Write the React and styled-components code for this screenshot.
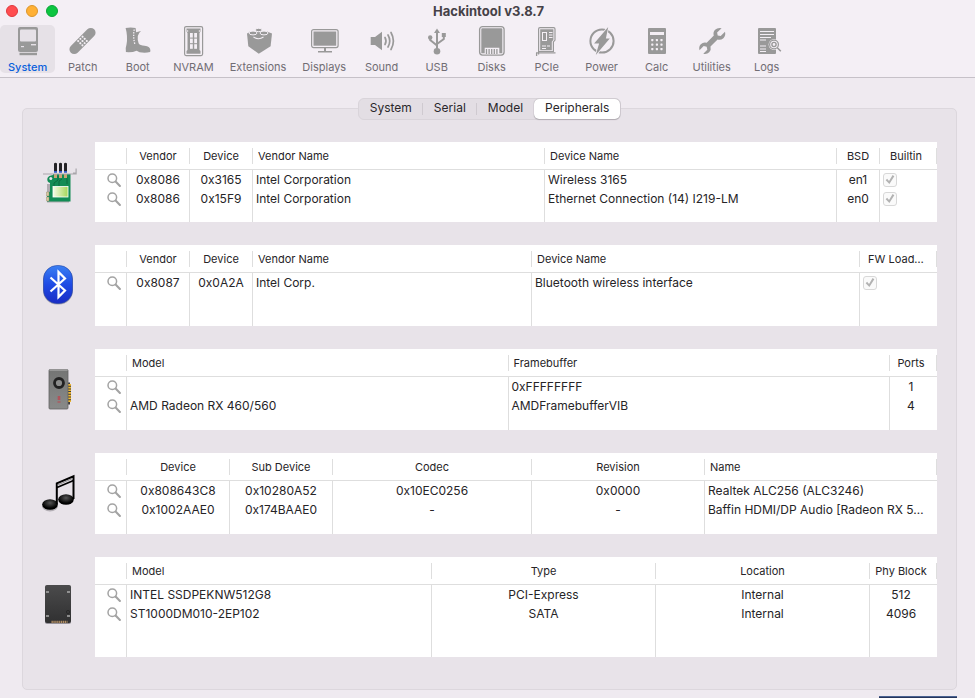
import React from "react";
import styled, { createGlobalStyle } from "styled-components";

const Global = createGlobalStyle`
  * { box-sizing: border-box; }
  html, body, #root { height: 100%; }
  body {
    margin: 0;
    background: #efeaf0;
    color: #262427;
    font-family: Inter, "Liberation Sans", sans-serif;
    font-size: 12px;
    overflow: hidden;
  }
  button { font: inherit; color: inherit; border: 0; background: none; padding: 0; }
`;

const Window = styled.div`
  display: flex;
  flex-direction: column;
  min-height: 100%;
`;

const Header = styled.header`
  background: #f4eff5;
  border-bottom: 1px solid #c6c1c8;
  padding-bottom: 4px;
`;

const TitleBar = styled.div`
  display: grid;
  grid-template-columns: 1fr auto 1fr;
  align-items: center;
  height: 25px;
  padding: 0 4px 3px 6px;
`;

const Lights = styled.div`
  display: flex;
  gap: 8px;
`;

const Light = styled.button`
  width: 12px;
  height: 12px;
  border-radius: 50%;
  background: ${(p) => p.$fill};
  border: 1px solid ${(p) => p.$edge};
`;

const Title = styled.h1`
  margin: 0;
  font-size: 13px;
  line-height: 16px;
  font-weight: 700;
  color: #454147;
`;

const Toolbar = styled.nav`
  display: flex;
`;

const Tool = styled.button`
  display: flex;
  flex-direction: column;
  align-items: center;
  min-width: 55px;
  height: 48px;
  padding: 0 8px;
  border-radius: 5px;
  font-size: 11px;
  line-height: 16px;
  gap: 2px;
  --ground: ${(p) => (p.$active ? "#e6e1e7" : "#f4eff5")};
  background: var(--ground);
  color: ${(p) => (p.$active ? "#0a60dc" : "#716d74")};
  font-weight: ${(p) => (p.$active ? 500 : 400)};
`;

const ToolSvg = styled.svg`
  display: block;
  width: 31px;
  height: 32px;
  flex: none;
  fill: #999;
  stroke: none;
`;

const Main = styled.main`
  display: flex;
  flex-direction: column;
  padding: 20px 18px 6px 22px;
`;

const Segments = styled.div`
  display: flex;
  align-self: center;
  margin: 0 0 -12px;
  z-index: 1;
  height: 22px;
  border-radius: 6px;
  border: 1px solid #d9d4da;
  background: #e3dee4;
`;

const Segment = styled.button`
  display: flex;
  align-items: center;
  padding: 0 11px 2px;
  line-height: 18px;
  color: #2a272b;
  background: ${(p) =>
    p.$divider ? "linear-gradient(#cfcad0, #cfcad0) no-repeat right 4px / 1px 12px" : "none"};

  &[aria-selected="true"] {
    border-radius: 5px;
    background: #fff;
    box-shadow: 0 0 1px #8c888e, 0 1px 1px #b5b0b6;
  }
`;

const Panel = styled.section`
  display: flex;
  flex-direction: column;
  gap: 23px;
  padding: 33px 19px 32px 11px;
  border: 1px solid #dcd7dd;
  border-radius: 5px;
  background: #e8e3e9;
`;

const Group = styled.div`
  display: grid;
  grid-template-columns: 50px minmax(0, 1fr);
  column-gap: 11px;
  align-items: start;
`;

const Device = styled.svg`
  display: block;
  width: 50px;
  height: 50px;
  margin-top: 18px;
`;

const Table = styled.table`
  width: 100%;
  height: ${(p) => p.$height}px;
  table-layout: fixed;
  border-collapse: separate;
  border-spacing: 0;
  background: #fff;
`;

const Col = styled.col`
  width: ${(p) => (p.$width ? `${p.$width}px` : "auto")};
`;

const Th = styled.th`
  height: 28px;
  padding: 0 6px 0 5px;
  border-bottom: 1px solid #dedede;
  background: linear-gradient(#dedede, #dedede) no-repeat right 6px / 1px 16px;
  font-size: 11px;
  font-weight: 400;
  line-height: 16px;
  text-align: ${(p) => (p.$left ? "left" : "center")};
  white-space: nowrap;
  overflow: hidden;
  &:last-child {
    padding-left: ${(p) => (p.$left ? 5 : 3)}px;
    padding-right: 8px;
  }
`;

const Td = styled.td`
  height: ${(p) => (p.$filler ? "auto" : "19px")};
  padding: 0 3px;
  border-right: 1px solid #dedede;
  line-height: 19px;
  text-align: ${(p) => (p.$left ? "left" : "center")};
  white-space: nowrap;
  overflow: hidden;
  text-overflow: ellipsis;
  &:last-child {
    border-right-color: transparent;
    padding-right: 7px;
  }
`;

const Lookup = styled.button`
  display: block;
  margin-left: 9px;
  svg { display: block; width: 14px; height: 14px; }
`;

const Check = styled.input`
  appearance: none;
  display: block;
  width: 14px;
  height: 14px;
  margin: 0;
  border: 1px solid #d8d8d8;
  border-radius: 3px;
  background: #fafafa;
  &::before {
    content: "";
    display: block;
    width: 12px;
    height: 12px;
    background: #b2b2b2;
    clip-path: polygon(14% 56%, 26% 44%, 42% 62%, 72% 12%, 86% 22%, 45% 88%);
  }
`;

const Dock = styled.div`
  align-self: flex-end;
  width: 78px;
  height: 2px;
  margin-right: 18px;
  background: #26355c;
  border-top: 1px solid #4a6391;
`;

const cut = { fill: "var(--ground)" };
const line = { fill: "none", stroke: "#999" };
const cutLine = { fill: "none", stroke: "var(--ground)" };

const grid = (xs, ys, draw) => xs.flatMap((x) => ys.map((y) => draw(x, y)));

const toolIcons = {
  System: (
    <>
      <rect x="6" y="2" width="20" height="25" rx="2" />
      <rect x="8" y="4.5" width="16" height="12" rx="1" {...cut} />
      <rect x="19" y="19" width="5" height="1.4" {...cut} />
      <rect x="9" y="21" width="3" height="1.2" {...cut} />
      <path d="M7.5 27.8h17.5v2.4h-17.5z" />
    </>
  ),
  Patch: (
    <g transform="rotate(-45 15.5 16)">
      <rect x="-1" y="11.2" width="33" height="9.6" rx="4.8" />
      {grid([12.4, 15.5, 18.6], [13, 16, 19], (x, y) => (
        <circle key={`${x}-${y}`} cx={x} cy={y} r="1.05" {...cut} />
      ))}
    </g>
  ),
  Boot: (
    <>
      <path d="M3.6 3q5-1.2 10 0l.5 4.2 4.9-1.3q-2.6 2-3.2 5.1-.5 4 .9 7.5 1.400 2 5.800 2.300 6 .4 5.900 5l-.3 1.200q-5 1.200-10.500.2l-3-1.500q-4.400 2-10.700 1.400-.8-3.500.6-7.500 1.500-8-.9-16.600z" />
      <path d="M12.2 4.5q-1.3 7 .6 14.500" {...cutLine} strokeWidth="1.3" strokeDasharray="1.4 1.2" />
    </>
  ),
  NVRAM: (
    <>
      <rect x="6.6" y="1.6" width="18" height="29" rx="1.5" {...line} strokeWidth="1.2" />
      <path d="M8.5 3.5h14v3l-1 1.500v17l1 1v2.800h-14v-2.800l1-1v-17l-1-1.500z" />
      {grid([12, 16.2], [8, 13.6, 19.2], (x, y) => (
        <rect key={`${x}-${y}`} x={x} y={y} width="2.8" height="4.6" {...cut} />
      ))}
      <circle cx="9.5" cy="6" r=".8" {...cut} />
      <circle cx="21.5" cy="6" r=".8" {...cut} />
    </>
  ),
  Extensions: (
    <>
      <path d="M4 8.500l5-2.500h13.500l6.500 2.500-1.400 12.800-11.800 7.500-10.500-7.500z" />
      <g stroke="var(--ground)" strokeWidth="1">
        <ellipse cx="15.700" cy="5" rx="3.400" ry="1.700" />
        <ellipse cx="10" cy="8" rx="4" ry="1.900" />
        <ellipse cx="21" cy="8" rx="4" ry="1.900" />
      </g>
      <path d="M10.500 12q5 3.400 10 0" {...cutLine} strokeWidth="1.100" />
    </>
  ),
  Displays: (
    <>
      <rect x="2.6" y="4.6" width="26.5" height="18" rx="2" {...line} strokeWidth="1.2" />
      <rect x="4.5" y="6.5" width="22.7" height="14.2" />
      <path d="M15 23h2v3h6v1.5h-14v-1.5h6z" />
    </>
  ),
  Sound: (
    <>
      <path d="M4.7 12h4.300l7-5.300v18.600l-7-5.300h-4.300z" />
      <g {...line} strokeWidth="1.7" strokeLinecap="round">
        <path d="M19 12.5q2 3.500 0 7" />
        <path d="M22 10q3.500 6 0 12" />
        <path d="M25 7.5q4.800 8.500 0 17" />
      </g>
    </>
  ),
  USB: (
    <>
      <path d="M16 3.5l3 4.500h-6z" />
      <circle cx="16" cy="26.2" r="3.3" />
      <circle cx="9.2" cy="12.5" r="2.2" />
      <path d="M20.8 8h4v4h-4z" />
      <path d="M16 7v18M9.2 12.5v2.5l6.800 5.500M22.800 11v3l-6.800 5" {...line} strokeWidth="2" />
    </>
  ),
  Disks: (
    <>
      <rect x="3.6" y="1.6" width="24.5" height="28.5" rx="3" {...line} strokeWidth="1.3" />
      <path d="M5.3 4.3q0-1 1-1h19q1 0 1 1v24h-3v-5.500h-14.600v5.500h-3.400z" />
      <path d="M10.5 24v5M13.1 24v5M15.7 24v5M18.3 24v5M20.9 24v5" {...line} strokeWidth="1.3" />
    </>
  ),
  PCIe: (
    <>
      <path d="M7.6 29.5v-25.500q0-1.400 1.400-1.400h13.600q1.400 0 1.400 1.400v11l-1.600 2v9.500h-14.800" {...line} strokeWidth="1.2" />
      <path d="M9.2 4.2h13.200v10.500l-1.600 2v8.600h-11.600z" />
      <path d="M5 27.8h19.500M5.6 28v3" {...line} strokeWidth="1.3" />
      <rect x="11.5" y="7.5" width="4" height="8" {...cutLine} />
      <path d="M18 7.5h3.500M18 10h3.500M18 12.5h3.500M11 21h4M16 21h3M11 23.5h4" {...cutLine} strokeWidth="1" />
    </>
  ),
  Power: (
    <>
      <circle cx="16" cy="16" r="11.6" {...line} strokeWidth="2" />
      <path d="M22.2 2l-2.300 11.500h3.900l-14 16.500 3.300-11.600h-5z" stroke="var(--ground)" strokeWidth="1.6" paintOrder="stroke" />
    </>
  ),
  Calc: (
    <>
      <rect x="7" y="3" width="18" height="26" rx="1" />
      <rect x="9" y="7" width="14" height="3" {...cut} />
      {grid([10.2, 14.8, 19.4], [14, 18.5, 23], (x, y) => (
        <rect key={`${x}-${y}`} x={x} y={y} width="2.2" height="2.2" rx=".6" {...cut} />
      ))}
    </>
  ),
  Utilities: (
    <path d="M25.6 3.2l-4.500 4.300.6 3.100 3 .5 4.300-4.300q1 4-1.600 6.400-2.600 2.200-5.800 1.300l-7.100 7.100q.9 3.200-1.300 5.700-2.300 2.300-5.900 1.500l4-4-.6-3.100-3-.6-4.200 4.200q-1-3.600 1.300-6.100 2.500-2.500 5.900-1.500l7.100-7.100q-1.100-3.300 1.300-5.800 2.600-2.500 6.500-1.600z" />
  ),
  Logs: (
    <>
      <rect x="7" y="3" width="18" height="26" rx="1" />
      <path d="M9 6.5h14M9 9.5h14M9 12.5h11M9 15h6M9 21h6M9 24h6M9 26.5h6" {...cutLine} strokeWidth="1" />
      <circle cx="23" cy="19.5" r="5.4" {...cut} />
      <circle cx="23" cy="19.5" r="4.4" {...line} strokeWidth="1.2" />
      <circle cx="23" cy="19.5" r="2.1" {...line} strokeWidth="1.4" />
      <path d="M26.3 22.8l3.500 3.500" {...line} strokeWidth="1.6" />
    </>
  ),
};

const NetworkIcon = () => (
  <Device viewBox="0 0 50 50" role="img" aria-label="Network">
    <defs>
      <linearGradient id="lcd">
        <stop offset="0" stopColor="#f4fbe6" />
        <stop offset="1" stopColor="#a5d659" />
      </linearGradient>
    </defs>
    <path d="M13 24h22v18.500h-22z" fill="#77737a" opacity=".5" />
    <path d="M19 14h17.500v27.500h-23.500v-8l3-2v-8.500q-3.500-1-2.500-5 1-2.500 5.500-3z" fill="#128c55" />
    <path d="M20 27v-4l4-3v-4M25 26v-5l3-2M33 17v7" stroke="#0b6b40" fill="none" />
    <circle cx="16.8" cy="18.5" r="1.5" fill="#e8e3e9" />
    <path d="M20 14h3v4h-3zM25 14h3v4h-3zM30 14h3v4h-3z" fill="#c9a574" />
    <path d="M9 13.5h30v-1h2.500v-4h1.200v6h-33.700z" fill="#a9a6ab" />
    <path d="M20 3.5q1.500-1.500 3 0v8h-3zM25 3.5q1.500-1.500 3 0v8h-3zM30 3.5q1.500-1.500 3 0v8h-3z" fill="#242326" />
    <path d="M20 11h3v1.700h-3zM25 11h3v1.700h-3zM30 11h3v1.700h-3z" fill="#3357c2" />
    <rect x="19" y="26.5" width="15" height="10.5" fill="url(#lcd)" stroke="#fff" strokeWidth=".8" />
    <path d="M12.5 32h2.500v4h-2.500zM12.5 37h2.500v4h-2.500z" fill="#d8c9a0" stroke="#8b7f61" strokeWidth=".4" />
  </Device>
);

const BluetoothIcon = () => (
  <Device viewBox="0 0 50 50" role="img" aria-label="Bluetooth">
    <defs>
      <linearGradient id="bt" x2="0" y2="1">
        <stop offset="0" stopColor="#3a80f3" />
        <stop offset=".5" stopColor="#1f4be4" />
        <stop offset="1" stopColor="#1a2cc4" />
      </linearGradient>
    </defs>
    <rect x="9" y="3" width="30" height="38.5" rx="14" fill="#8d899a" opacity=".7" />
    <rect x="9.5" y="2.5" width="29" height="38" rx="13.5" fill="url(#bt)" stroke="#2145a8" strokeWidth=".6" />
    <path d="M16.5 14.5l14.500 13-6.500 6.500v-25l6.500 6.500-14.500 13" fill="none" stroke="#fff" strokeWidth="2.2" />
  </Device>
);

const GraphicsIcon = () => (
  <Device viewBox="0 0 50 50" role="img" aria-label="Graphics">
    <defs>
      <linearGradient id="gpu" x2="0" y2="1">
        <stop offset="0" stopColor="#747574" />
        <stop offset="1" stopColor="#898a89" />
      </linearGradient>
    </defs>
    <path d="M33 15.5h3v22h-3z" fill="#3c3a3a" />
    <path d="M35.5 17v18" stroke="#3c3a3a" strokeWidth="3" />
    <path d="M35.5 17v18" stroke="#f2b92e" strokeWidth="3" strokeDasharray="1.7 1" />
    <rect x="15" y="2.5" width="19" height="39.5" rx="1" fill="url(#gpu)" stroke="#626262" strokeWidth=".8" />
    <path d="M15.5 3h18" stroke="#b7b7b7" />
    <circle cx="25" cy="16" r="4.5" fill="#8b8c8b" stroke="#222" strokeWidth="2.8" />
    <path d="M23.5 30h3M23.5 32h3M25 29v4M23.5 35h3" stroke="#bd4650" strokeWidth="1.1" />
  </Device>
);

const AudioIcon = () => (
  <Device viewBox="0 0 50 50" role="img" aria-label="Audio">
    <defs>
      <radialGradient id="note" cy=".35">
        <stop offset="0" stopColor="#555" />
        <stop offset="1" stopColor="#000" />
      </radialGradient>
    </defs>
    <ellipse cx="16" cy="35" rx="8" ry="5.4" fill="#9c989e" opacity=".7" />
    <ellipse cx="16" cy="33.5" rx="7.8" ry="5.3" fill="url(#note)" />
    <ellipse cx="32" cy="28.5" rx="7.8" ry="5.3" fill="url(#note)" />
    <path d="M22.8 33v-20.700l16.700-7v22.700" fill="none" stroke="#000" strokeWidth="2" />
    <path d="M23 16.5l16.500-7" stroke="#000" strokeWidth="1.8" />
    <path d="M23 14.3l16-7" stroke="#777" strokeWidth=".8" />
  </Device>
);

const StorageIcon = () => (
  <Device viewBox="0 0 50 50" role="img" aria-label="Storage">
    <defs>
      <linearGradient id="ssd" x2="0" y2="1">
        <stop offset="0" stopColor="#4b4b4c" />
        <stop offset="1" stopColor="#303031" />
      </linearGradient>
    </defs>
    <rect x="11" y="10.5" width="26" height="38.5" rx="2" fill="#96929a" />
    <rect x="11" y="10" width="26" height="38" rx="2" fill="url(#ssd)" />
    <path d="M12 17h3M33 17h3M12 41h3M33 41h3" stroke="#aaa" strokeWidth="1.6" />
    <circle cx="34" cy="37" r="1.6" fill="none" stroke="#222" strokeWidth=".7" />
    <path d="M17.5 46.8h16" stroke="#b18e65" strokeWidth="2.2" strokeDasharray="1.3 .6" />
  </Device>
);

const col = (label, width, left) => ({ label, width, left });

const groups = [
  {
    Icon: NetworkIcon,
    height: 80,
    cols: [col("Vendor", 63), col("Device", 63), col("Vendor Name", 0, true), col("Device Name", 0, true), col("BSD", 43), col("Builtin", 57)],
    rows: [
      ["0x8086", "0x3165", "Intel Corporation", "Wireless 3165", "en1", true],
      ["0x8086", "0x15F9", "Intel Corporation", "Ethernet Connection (14) I219-LM", "en0", true],
    ],
  },
  {
    Icon: BluetoothIcon,
    height: 81,
    cols: [col("Vendor", 63), col("Device", 63), col("Vendor Name", 279, true), col("Device Name", 0, true), col("FW Load…", 77)],
    rows: [["0x8087", "0x0A2A", "Intel Corp.", "Bluetooth wireless interface", true]],
  },
  {
    Icon: GraphicsIcon,
    height: 81,
    cols: [col("Model", 0, true), col("Framebuffer", 0, true), col("Ports", 47)],
    rows: [
      ["", "0xFFFFFFFF", "1"],
      ["AMD Radeon RX 460/560", "AMDFramebufferVIB", "4"],
    ],
  },
  {
    Icon: AudioIcon,
    height: 81,
    cols: [col("Device", 103), col("Sub Device", 103), col("Codec", 199), col("Revision", 173), col("Name", 0, true)],
    rows: [
      ["0x808643C8", "0x10280A52", "0x10EC0256", "0x0000", "Realtek ALC256 (ALC3246)"],
      ["0x1002AAE0", "0x174BAAE0", "-", "-", "Baffin HDMI/DP Audio [Radeon RX 5…"],
    ],
  },
  {
    Icon: StorageIcon,
    height: 100,
    cols: [col("Model", 0, true), col("Type", 224), col("Location", 214), col("Phy Block", 67)],
    rows: [
      ["INTEL SSDPEKNW512G8", "PCI-Express", "Internal", "512"],
      ["ST1000DM010-2EP102", "SATA", "Internal", "4096"],
    ],
  },
];

const DeviceGroup = ({ Icon, height, cols, rows }) => (
  <Group>
    <Icon />
    <Table $height={height}>
      <colgroup>
        <Col $width={32} />
        {cols.map((c) => <Col key={c.label} $width={c.width} />)}
      </colgroup>
      <thead>
        <tr>
          <Th aria-label="Show" />
          {cols.map((c) => <Th key={c.label} $left={c.left}>{c.label}</Th>)}
        </tr>
      </thead>
      <tbody>
        {rows.map((row, r) => (
          <tr key={r}>
            <Td $left>
              <Lookup aria-label="Show device">
                <svg viewBox="0 0 14 14" fill="none" stroke="#a3a3a3">
                  <circle cx="5.3" cy="5.3" r="4.3" strokeWidth="1.5" />
                  <path d="M8.6 8.6l4.300 4.300" strokeWidth="2.1" strokeLinecap="round" />
                </svg>
              </Lookup>
            </Td>
            {row.map((v, i) => (
              <Td key={i} $left={cols[i].left}>
                {v === true ? <Check type="checkbox" aria-label={cols[i].label} defaultChecked disabled /> : v}
              </Td>
            ))}
          </tr>
        ))}
        <tr>
          <Td $filler />
          {cols.map((c) => <Td key={c.label} $filler />)}
        </tr>
      </tbody>
    </Table>
  </Group>
);

export default function App() {
  return (
    <Window>
      <Global />
      <Header>
        <TitleBar>
          <Lights>
            <Light aria-label="Close" $fill="#ff4d50" $edge="#e0383d" />
            <Light aria-label="Minimize" $fill="#ffb035" $edge="#dc962b" />
            <Light aria-label="Zoom" $fill="#0cc540" $edge="#0ba437" />
          </Lights>
          <Title>Hackintool v3.8.7</Title>
        </TitleBar>
        <Toolbar>
          {Object.entries(toolIcons).map(([name, drawing]) => (
            <Tool key={name} $active={name === "System"}>
              <ToolSvg viewBox="0 0 31 32" aria-hidden="true">{drawing}</ToolSvg>
              {name}
            </Tool>
          ))}
        </Toolbar>
      </Header>
      <Main>
        <Segments role="tablist">
          <Segment role="tab" aria-selected="false" $divider>System</Segment>
          <Segment role="tab" aria-selected="false" $divider>Serial</Segment>
          <Segment role="tab" aria-selected="false">Model</Segment>
          <Segment role="tab" aria-selected="true">Peripherals</Segment>
        </Segments>
        <Panel>
          {groups.map((g, i) => <DeviceGroup key={i} {...g} />)}
        </Panel>
      </Main>
      <Dock />
    </Window>
  );
}
